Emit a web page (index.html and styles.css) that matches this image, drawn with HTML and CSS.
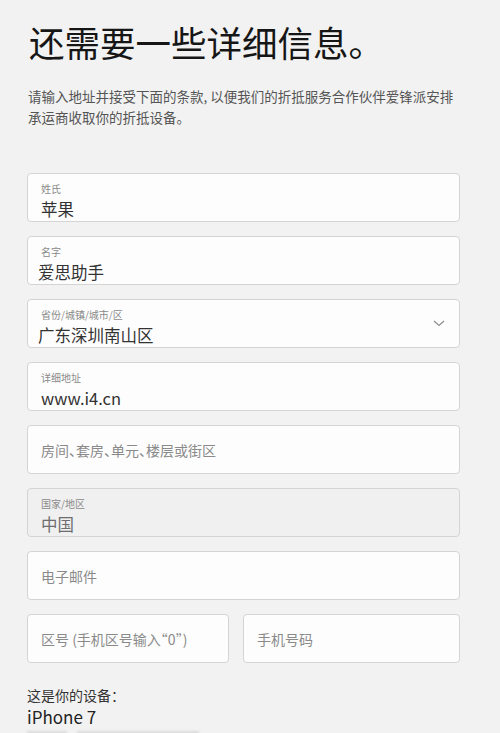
FILE: index.html
```html
<!DOCTYPE html>
<html lang="zh-CN">
<head>
    <meta charset="UTF-8">
    <meta name="viewport" content="width=device-width, initial-scale=1.0">
    <title>还需要一些详细信息</title>
    <link rel="stylesheet" href="styles.css">
</head>
<body>
    <div class="page">
        <h1>还需要一些详细信息。</h1>
        <p class="intro">请输入地址并接受下面的条款, 以便我们的折抵服务合作伙伴爱锋派安排承运商收取你的折抵设备。</p>

        <div class="form">
            <div class="field">
                <div class="field-body">
                    <div class="label">姓氏</div>
                    <div class="value">苹果</div>
                </div>
            </div>
            <div class="field">
                <div class="field-body">
                    <div class="label">名字</div>
                    <div class="value shift">爱思助手</div>
                </div>
            </div>
            <div class="field">
                <div class="field-body">
                    <div class="label">省份/城镇/城市/区</div>
                    <div class="value shift">广东深圳南山区</div>
                </div>
                <svg class="chevron" width="12" height="7" viewBox="0 0 12 7">
                    <polyline points="1,1 6,5.5 11,1" fill="none" stroke="#8c8c8c" stroke-width="1.2"/>
                </svg>
            </div>
            <div class="field">
                <div class="field-body">
                    <div class="label">详细地址</div>
                    <div class="value">www.i4.cn</div>
                </div>
            </div>
            <div class="field">
                <div class="placeholder">房间、套房、单元、楼层或街区</div>
            </div>
            <div class="field disabled">
                <div class="field-body">
                    <div class="label">国家/地区</div>
                    <div class="value">中国</div>
                </div>
            </div>
            <div class="field">
                <div class="placeholder">电子邮件</div>
            </div>
            <div class="row">
                <div class="field">
                    <div class="placeholder">区号 (手机区号输入“0”)</div>
                </div>
                <div class="field">
                    <div class="placeholder">手机号码</div>
                </div>
            </div>
        </div>

        <div class="device">
            <div class="device-title">这是你的设备：</div>
            <div class="device-name">iPhone 7</div>
            <div class="device-serial">
                <span class="mask short"></span>
                <span class="mask long"></span>
            </div>
        </div>
    </div>
</body>
</html>
```

FILE: styles.css
```css
* {
    box-sizing: border-box;
}

body {
    margin: 0;
    padding: 0;
    background-color: #f2f2f2;
    font-family: "Noto Sans CJK SC", "Noto Sans", sans-serif;
    color: #1d1d1f;
    overflow: hidden;
}

.page {
    padding: 20px 40px 0 27px;
}

h1 {
    margin: 0 0 0 2px;
    font-size: 35.5px;
    line-height: 44px;
    font-weight: 400;
    color: #161616;
}

.intro {
    margin: 22px 0 0 1px;
    font-size: 13.5px;
    line-height: 21px;
    color: #555;
}

.form {
    margin-top: 45px;
    display: flex;
    flex-direction: column;
    gap: 14px;
}

.field {
    height: 49px;
    display: flex;
    align-items: center;
    background-color: #fdfdfd;
    border: 1px solid #d4d4d4;
    border-radius: 4px;
    padding: 0 14px 0 13px;
}

.field-body {
    flex: 1;
    align-self: stretch;
    padding-top: 8px;
}

.label {
    font-size: 10px;
    line-height: 14px;
    color: #8a8a8a;
}

.value {
    margin-top: 2px;
    font-size: 16.5px;
    line-height: 22px;
    color: #333;
}

.value.shift {
    margin-left: -3px;
}

.placeholder {
    font-size: 14px;
    line-height: 20px;
    color: #8a8a8a;
    font-feature-settings: "halt";
}

.disabled {
    background-color: #f0f0f0;
}

.disabled .value {
    color: #6e6e6e;
}

.chevron {
    display: block;
}

.row {
    display: grid;
    grid-template-columns: 202px 1fr;
    gap: 14px;
}

.device {
    margin-top: 22px;
}

.device-title {
    font-size: 14px;
    line-height: 21px;
    color: #333;
}

.device-name {
    font-size: 17px;
    line-height: 22px;
    color: #222;
}

.device-serial {
    display: flex;
    gap: 10px;
    padding-top: 3px;
    filter: blur(1px);
}

.mask {
    display: block;
    height: 12px;
    background-color: #dcdcdc;
}

.mask.short {
    width: 40px;
}

.mask.long {
    width: 122px;
}
```
